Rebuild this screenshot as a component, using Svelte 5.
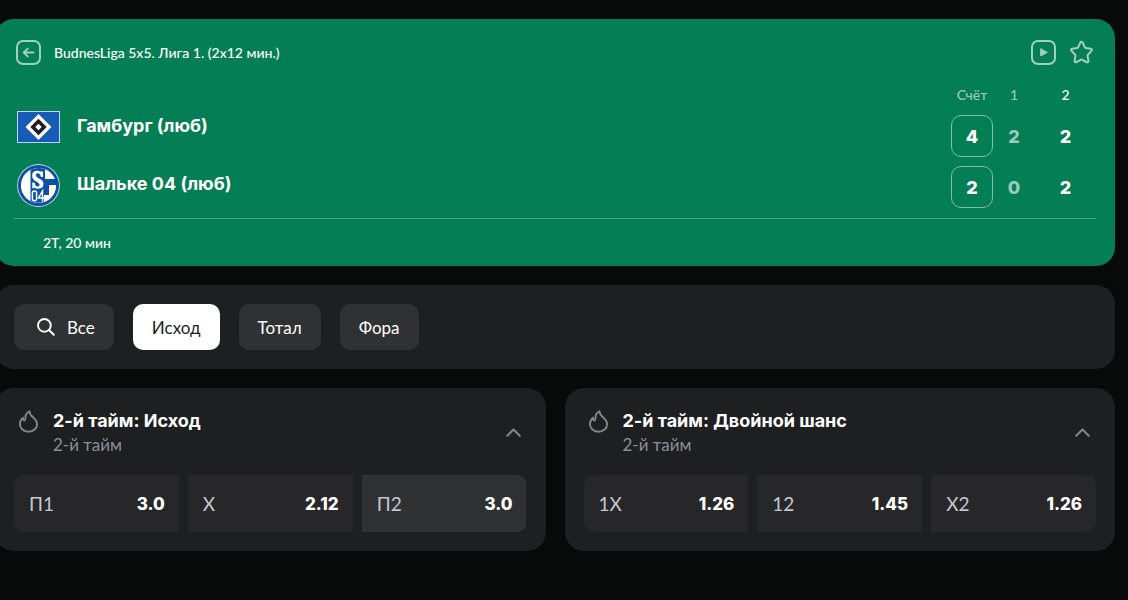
<script>
  const filters = ['Исход', 'Тотал', 'Фора'];
  let selected = $state('Исход');

  let markets = $state([
    {
      title: '2-й тайм: Исход',
      period: '2-й тайм',
      open: true,
      odds: [
        { name: 'П1', value: '3.0' },
        { name: 'X', value: '2.12' },
        { name: 'П2', value: '3.0', active: true },
      ],
    },
    {
      title: '2-й тайм: Двойной шанс',
      period: '2-й тайм',
      open: true,
      odds: [
        { name: '1X', value: '1.26' },
        { name: '12', value: '1.45' },
        { name: 'X2', value: '1.26' },
      ],
    },
  ]);
</script>

<main>
  <section class="match">
    <header>
      <button class="icon" aria-label="Назад">
        <svg width="25" height="25" viewBox="0 0 25 25">
          <rect x="1" y="1" width="23" height="23" rx="6" />
          <path d="M17.5 12.5H8M11.7 8.6L7.8 12.5L11.7 16.4" />
        </svg>
      </button>
      <h1>BudnesLiga 5x5. Лига 1. (2x12 мин.)</h1>
      <button class="icon" aria-label="Трансляция">
        <svg width="25" height="25" viewBox="0 0 25 25">
          <rect x="1" y="1" width="23" height="23" rx="6" />
          <path class="solid" d="M9.7 9V16L16 12.5Z" />
        </svg>
      </button>
      <button class="icon" aria-label="В избранное">
        <svg width="25" height="25" viewBox="0 0 25 25">
          <path
            d="M11.3 2.7Q12.5 1 13.7 2.7L15.8 7.2Q16.2 7.9 17 8L21.6 8.7Q23.8 9.2 22.3 11L19 14.6Q18.5 15.2 18.6 16L19.4 20.7Q19.5 22.9 17.4 22L13.3 19.8Q12.5 19.4 11.7 19.8L7.6 22Q5.5 22.9 5.6 20.7L6.4 16Q6.5 15.2 6 14.6L2.7 11Q1.2 9.2 3.4 8.7L8 8Q8.8 7.9 9.2 7.2Z"
          />
        </svg>
      </button>
    </header>

    <div class="board">
      <div class="teams">
        <div class="team">
          <svg width="43" height="32" viewBox="0 0 43 32">
            <rect width="43" height="32" fill="#c3d5ed" />
            <rect x="1" y="1" width="41" height="30" fill="#175bb6" />
            <path d="M21.5 3L34.5 16L21.5 29L8.5 16Z" fill="#fff" />
            <path d="M21.5 7.8L29.7 16L21.5 24.2L13.3 16Z" fill="#201e20" />
            <path d="M21.5 12.8L24.7 16L21.5 19.2L18.3 16Z" fill="#fff" />
          </svg>
          <span>Гамбург (люб)</span>
        </div>
        <div class="team">
          <svg width="43" height="43" viewBox="0 0 43 43">
            <circle cx="21.5" cy="21.5" r="21.4" fill="#bcd5e8" />
            <circle cx="21.5" cy="21.5" r="20.5" fill="#0c51a3" />
            <circle cx="21.5" cy="21.5" r="17.6" fill="#fff" />
            <path d="M13.5 5.8Q21 2.4 28 5.3V15H40V21H32V31H27V37.7Q20 40 13.5 37Z" fill="#0c51a3" />
            <path
              d="M26 8V13H23.8Q23.5 9.3 20.7 9.3Q18.8 9.3 18.8 11.2Q18.8 13 22 14.4Q26.5 16.3 26.5 19.8Q26.5 24.7 21.2 24.7Q18.8 24.7 17.2 23.8L15.3 24.6V18.5H17.5Q18.2 22.6 20.8 22.6Q22.6 22.6 22.6 20.7Q22.6 19 19.3 17.4Q15.1 15.5 15.1 11.7Q15.1 6.7 20.2 6.7Q22.3 6.7 23.7 7.8L24.5 6.9Z"
              fill="#fff"
            />
            <g fill="none" stroke="#fff" stroke-width="1.5">
              <rect x="15.4" y="27" width="4.2" height="9.8" rx="2" />
              <path d="M25.5 37.5V27L21.5 34H27.5" />
            </g>
          </svg>
          <span>Шальке 04 (люб)</span>
        </div>
      </div>

      <table>
        <thead>
          <tr><th class="total">Счёт</th><th>1</th><th class="current">2</th></tr>
        </thead>
        <tbody>
          <tr><td class="total">4</td><td>2</td><td class="current">2</td></tr>
          <tr><td class="total">2</td><td>0</td><td class="current">2</td></tr>
        </tbody>
      </table>
    </div>

    <footer>2Т, 20 мин</footer>
  </section>

  <nav>
    <button>
      <svg width="18" height="18" viewBox="0 0 19 19">
        <circle cx="7.8" cy="7.8" r="6.7" />
        <path d="M12.7 12.7L17.7 17.7" />
      </svg>
      Все
    </button>
    {#each filters as name}
      <button class:selected={selected === name} onclick={() => (selected = name)}>{name}</button>
    {/each}
  </nav>

  <div class="markets">
    {#each markets as market}
      <section class="market">
        <div class="head">
          <svg width="19" height="23" viewBox="0 0 20 24">
            <path
              d="M11 1.2C8 3 6.6 5.7 6.8 8.3C6.8 9.7 6.8 10.8 5.8 11C4.8 11.1 4.2 9.9 4.2 8.1C2.2 9.8 1 12.2 1 14.6C1 19.4 4.8 22.8 10 22.8C15.2 22.8 19 19.3 19 14.8C19 11.7 17.2 9.7 14.8 7.6C12.7 5.9 11.1 4.1 11 1.2Z"
            />
          </svg>
          <div class="names">
            <h2>{market.title}</h2>
            <p>{market.period}</p>
          </div>
          <button
            class="icon"
            aria-label="Свернуть"
            aria-expanded={market.open}
            onclick={() => (market.open = !market.open)}
          >
            <svg width="15" height="9" viewBox="0 0 15 9"><path d="M1.3 7.7L7.5 1.5L13.7 7.7" /></svg>
          </button>
        </div>
        {#if market.open}
          <div class="odds">
            {#each market.odds as odd}
              <button class:active={odd.active}><span>{odd.name}</span><b>{odd.value}</b></button>
            {/each}
          </div>
        {/if}
      </section>
    {/each}
  </div>
</main>

<style>
  :global(body) {
    margin: 0;
    background: #080a09;
    overflow-x: hidden;
  }
  main {
    display: flex;
    flex-direction: column;
    gap: 19px;
    margin: 0 13px 0 -5px;
    padding: 19px 0;
    font-family: Lato, 'Noto Sans', sans-serif;
    color: #fff;
  }
  button {
    margin: 0;
    border: 0;
    font: inherit;
    color: inherit;
    cursor: pointer;
  }
  h1,
  h2,
  p {
    margin: 0;
  }
  svg {
    flex: none;
    display: block;
  }
  .icon {
    padding: 0;
    background: none;
  }
  .icon svg,
  nav svg,
  .head > svg {
    fill: none;
    stroke: currentColor;
    stroke-width: 2;
    stroke-linecap: round;
    stroke-linejoin: round;
  }
  .match {
    padding: 19px 19px 0;
    border-radius: 19px;
    background: #047e54;
  }
  header {
    display: flex;
    align-items: center;
    gap: 13px;
    height: 29px;
    padding: 0 2px;
  }
  header .icon {
    color: #a3d0c0;
  }
  header .icon .solid {
    fill: currentColor;
    stroke-width: 1;
  }
  h1 {
    flex: 1;
    font-size: 14px;
    font-weight: 500;
    line-height: 20px;
  }
  .board {
    display: flex;
    justify-content: space-between;
    align-items: flex-end;
    margin-top: 10px;
    padding-bottom: 1px;
    border-bottom: 1px solid #4aa083;
  }
  .teams {
    padding: 0 0 3px 3px;
  }
  .team {
    display: flex;
    align-items: center;
    gap: 17px;
    height: 58px;
  }
  .team span {
    line-height: 20px;
    padding-bottom: 2px;
  }
  .team,
  td,
  h2,
  b {
    font-family: Inter, 'Noto Sans', sans-serif;
    font-size: 18px;
    font-weight: 700;
  }
  table {
    border-spacing: 0 9px;
    text-align: center;
  }
  th,
  td {
    box-sizing: border-box;
    width: 42px;
    padding: 0;
    color: #9bcbbb;
  }
  th {
    height: 20px;
    font-size: 14px;
    font-weight: 500;
    line-height: 18px;
    vertical-align: top;
  }
  td {
    height: 42px;
    font-weight: 800;
  }
  td.total {
    border: 1px solid #81bda9;
    border-radius: 10px;
    color: #fff;
  }
  .current {
    width: 61px;
    color: #fff;
  }
  footer {
    padding: 14px 29px;
    font-size: 14px;
    font-weight: 500;
    line-height: 19px;
  }
  nav,
  .market {
    padding: 19px;
    border-radius: 19px;
    background: #1e1f21;
  }
  nav {
    display: flex;
    gap: 19px;
  }
  nav button {
    display: flex;
    align-items: center;
    gap: 12px;
    height: 46px;
    padding: 0 19px;
    border-radius: 10px;
    background: #303133;
    font-size: 17px;
  }
  nav svg {
    margin-left: 4px;
  }
  nav .selected {
    background: #fff;
    color: #1e1f21;
  }
  .markets {
    display: grid;
    grid-template-columns: 1fr 1fr;
    align-items: start;
    gap: 19px;
  }
  .head {
    display: flex;
    gap: 15px;
    min-height: 48px;
    padding: 1px 6px 0 5px;
    color: #85868c;
  }
  .head > svg {
    margin-top: 2px;
  }
  .names {
    flex: 1;
  }
  h2 {
    color: #fff;
    line-height: 26px;
  }
  p {
    font-size: 17px;
    line-height: 22px;
    color: #8b8d99;
  }
  .odds {
    display: grid;
    grid-template-columns: repeat(3, 1fr);
    gap: 9px;
    margin-top: 19px;
    border-radius: 10px;
    overflow: hidden;
  }
  .odds button {
    display: flex;
    align-items: center;
    justify-content: space-between;
    height: 57px;
    padding: 0 14px 0 15px;
    background: #272729;
  }
  .odds button.active {
    background: #303133;
  }
  .odds span {
    font-size: 19px;
    color: #c5c7d1;
  }
  .odds b {
    font-size: 17px;
    font-weight: 800;
  }
</style>
